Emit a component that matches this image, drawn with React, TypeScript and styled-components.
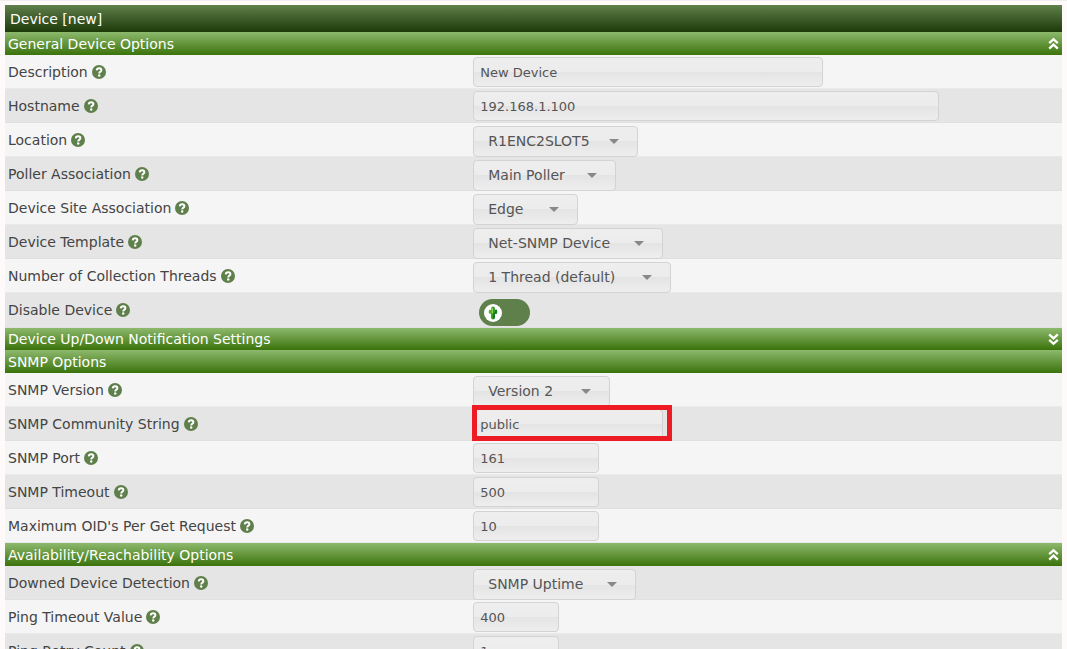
import React, { useId, useState } from "react";
import styled, { createGlobalStyle } from "styled-components";

const GlobalStyle = createGlobalStyle`
  *, *::before, *::after { box-sizing: border-box; }
  html { scrollbar-width: none; }
  body {
    margin: 0;
    background: #fffafa;
    color: #444;
    font: 14px/18px Verdana, "DejaVu Sans", sans-serif;
  }
`;

const Page = styled.main`
  border-top: 1px solid #eee;
  padding: 4px 5px 0;
`;

const Title = styled.h1`
  margin: 0;
  height: 27px;
  padding: 0 5px;
  font-size: 14px;
  line-height: 28px;
  font-weight: normal;
  color: #fff;
  background: linear-gradient(#5f7f4b, #1d3a09);
`;

const SectionHeader = styled.h2<{ $closed: boolean }>`
  display: flex;
  align-items: center;
  justify-content: space-between;
  margin: 0;
  height: ${(p) => (p.$closed ? 22 : 23)}px;
  padding: 0 3px;
  font-size: 14px;
  font-weight: normal;
  color: #fff;
  background: linear-gradient(#8db96d, #3b730b);
`;

const FoldButton = styled.button`
  display: flex;
  padding: 0;
  border: 0;
  background: none;
  color: #fff;
  cursor: pointer;
`;

const Row = styled.div<{ $shade: boolean; $tall: boolean }>`
  display: grid;
  grid-template-columns: 44.3% 1fr;
  height: ${(p) => (p.$tall ? 35 : 34)}px;
  background: ${(p) => (p.$shade ? "#e5e5e5" : "#f5f5f5")};
  border-bottom: 1px solid ${(p) => (p.$shade ? "#e0e0e0" : "#eaeaea")};
`;

const LabelCell = styled.div`
  display: flex;
  align-items: center;
  gap: 4px;
  padding-left: 3px;
`;

const ControlCell = styled.div`
  position: relative;
  display: flex;
  align-items: flex-start;
`;

const glossy = `
  border: 1px solid #d3d3d3;
  border-radius: 4px;
  background: linear-gradient(#eeeeee 0%, #ececec 50%, #e4e4e4 50%, #eeeeee 100%);
  color: #555;
  font-family: inherit;
`;

const TextInput = styled.input<{ $width: number }>`
  ${glossy}
  width: ${(p) => p.$width}px;
  max-width: 100%;
  height: 30px;
  margin-top: 2px;
  padding: 0 6px;
  font-size: 13px;
`;

const SelectWrap = styled.span<{ $width: number }>`
  position: relative;
  width: ${(p) => p.$width}px;
  height: 31px;
  margin-top: 3px;
  &::after {
    content: "";
    position: absolute;
    top: 13px;
    right: 19px;
    border: 5px solid transparent;
    border-top-color: #888;
    border-bottom: 0;
    pointer-events: none;
  }
`;

const SelectBox = styled.select`
  ${glossy}
  appearance: none;
  width: 100%;
  height: 100%;
  padding: 0 14px 2px;
  font-size: 14px;
`;

const Highlight = styled.span`
  position: absolute;
  top: -2px;
  left: -1px;
  width: 200px;
  height: 36px;
  border: 5px solid #ed1c24;
  pointer-events: none;
`;

const Toggle = styled.label`
  position: relative;
  display: flex;
  align-items: center;
  width: 51px;
  height: 27px;
  margin: 6px 0 0 6px;
  padding: 0 5px;
  border-radius: 14px;
  background: #5f7f4b;
  cursor: pointer;
  &:has(input:checked) { justify-content: flex-end; }
`;

const ToggleInput = styled.input`
  position: absolute;
  inset: 0;
  width: 100%;
  height: 100%;
  margin: 0;
  opacity: 0;
`;

const Knob = styled.span`
  display: flex;
  align-items: center;
  justify-content: center;
  width: 18px;
  height: 18px;
  border-radius: 50%;
  background: #fff;
`;

const HelpIcon = () => (
  <svg width="14" height="14" viewBox="0 0 14 14" aria-hidden="true">
    <circle cx="7" cy="7" r="7" fill="#5f7f4b" />
    <path d="M4.7 5.3C4.9 3.9 5.8 3.3 7.1 3.3C8.5 3.3 9.4 4.1 9.4 5.2C9.4 6.7 7.2 6.6 7.2 8.4" fill="none" stroke="#fff" strokeWidth="1.9" />
    <circle cx="7.2" cy="10.5" r="1.2" fill="#fff" />
  </svg>
);

const FoldIcon = ({ open }: { open: boolean }) => (
  <svg width="11" height="13" viewBox="0 0 11 13" fill="none" stroke="currentColor" strokeWidth="2.3" aria-hidden="true">
    <path d={open ? "M1.2 6.2L5.5 2.2L9.8 6.2M1.2 11.6L5.5 7.6L9.8 11.6" : "M1.2 1.4L5.5 5.4L9.8 1.4M1.2 6.8L5.5 10.8L9.8 6.8"} />
  </svg>
);

const Cactus = () => (
  <svg width="10" height="14" viewBox="0 0 10 14" aria-hidden="true">
    <path d="M2 5V6.6H4.5" fill="none" stroke="#53b02c" strokeWidth="2.4" strokeLinecap="round" strokeLinejoin="round" />
    <path d="M8 4.8V6.8H5.5" fill="none" stroke="#11801f" strokeWidth="2.4" strokeLinecap="round" strokeLinejoin="round" />
    <path d="M5 2.4V11.6" stroke="#2c9a25" strokeWidth="3.8" strokeLinecap="round" />
    <path d="M4.3 2.2V7" stroke="#93d050" strokeWidth="1.4" strokeLinecap="round" />
    <path d="M6 7.5V12" stroke="#0c6d1c" strokeWidth="1.4" strokeLinecap="round" />
  </svg>
);

type Field = {
  label: string;
  kind: "text" | "select" | "toggle";
  value?: string;
  width?: number;
  highlight?: boolean;
};

type Section = {
  title: string;
  fold?: "up" | "down";
  shadeFirst?: boolean;
  fields: Field[];
};

const sections: Section[] = [
  {
    title: "General Device Options",
    fold: "up",
    fields: [
      { label: "Description", kind: "text", value: "New Device", width: 350 },
      { label: "Hostname", kind: "text", value: "192.168.1.100", width: 466 },
      { label: "Location", kind: "select", value: "R1ENC2SLOT5", width: 165 },
      { label: "Poller Association", kind: "select", value: "Main Poller", width: 143 },
      { label: "Device Site Association", kind: "select", value: "Edge", width: 105 },
      { label: "Device Template", kind: "select", value: "Net-SNMP Device", width: 190 },
      { label: "Number of Collection Threads", kind: "select", value: "1 Thread (default)", width: 198 },
      { label: "Disable Device", kind: "toggle" },
    ],
  },
  { title: "Device Up/Down Notification Settings", fold: "down", fields: [] },
  {
    title: "SNMP Options",
    fields: [
      { label: "SNMP Version", kind: "select", value: "Version 2", width: 137 },
      { label: "SNMP Community String", kind: "text", value: "public", width: 190, highlight: true },
      { label: "SNMP Port", kind: "text", value: "161", width: 126 },
      { label: "SNMP Timeout", kind: "text", value: "500", width: 126 },
      { label: "Maximum OID's Per Get Request", kind: "text", value: "10", width: 126 },
    ],
  },
  {
    title: "Availability/Reachability Options",
    fold: "up",
    shadeFirst: true,
    fields: [
      { label: "Downed Device Detection", kind: "select", value: "SNMP Uptime", width: 163 },
      { label: "Ping Timeout Value", kind: "text", value: "400", width: 86 },
      { label: "Ping Retry Count", kind: "text", value: "1", width: 86 },
    ],
  },
];

function FieldRow({ field, shade }: { field: Field; shade: boolean }) {
  const id = useId();
  const { label, kind, value, width = 126, highlight } = field;
  return (
    <Row $shade={shade} $tall={kind === "toggle"}>
      <LabelCell>
        <label htmlFor={id}>{label}</label>
        <HelpIcon />
      </LabelCell>
      <ControlCell>
        {kind === "text" && <TextInput id={id} type="text" defaultValue={value} $width={width} />}
        {kind === "select" && (
          <SelectWrap $width={width}>
            <SelectBox id={id} defaultValue={value}>
              <option>{value}</option>
            </SelectBox>
          </SelectWrap>
        )}
        {kind === "toggle" && (
          <Toggle>
            <ToggleInput id={id} type="checkbox" />
            <Knob>
              <Cactus />
            </Knob>
          </Toggle>
        )}
        {highlight && <Highlight />}
      </ControlCell>
    </Row>
  );
}

function FormSection({ section }: { section: Section }) {
  const [open, setOpen] = useState(section.fold !== "down");
  return (
    <section>
      <SectionHeader $closed={!open}>
        {section.title}
        {section.fold && (
          <FoldButton type="button" aria-label={`Toggle ${section.title}`} onClick={() => setOpen(!open)}>
            <FoldIcon open={open} />
          </FoldButton>
        )}
      </SectionHeader>
      {open &&
        section.fields.map((field, i) => (
          <FieldRow key={field.label} field={field} shade={(i % 2 === 1) !== Boolean(section.shadeFirst)} />
        ))}
    </section>
  );
}

export default function App() {
  return (
    <>
      <GlobalStyle />
      <Page>
        <Title>Device [new]</Title>
        <form>
          {sections.map((section) => (
            <FormSection key={section.title} section={section} />
          ))}
        </form>
      </Page>
    </>
  );
}
